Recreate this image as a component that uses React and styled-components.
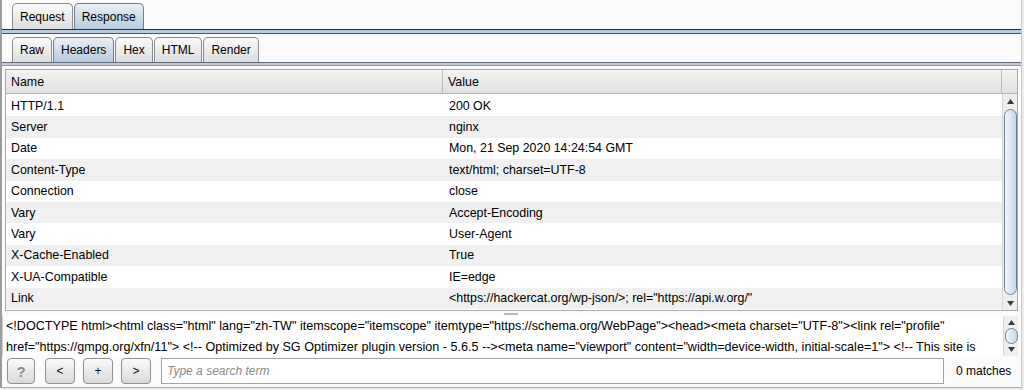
import React from "react";
import styled, { createGlobalStyle, css } from "styled-components";

const GlobalStyle = createGlobalStyle`
  html, body {
    margin: 0;
    padding: 0;
    background: #ececec;
  }
  body {
    font-family: "Liberation Sans", Arial, sans-serif;
    font-size: 12px;
    color: #000;
  }
`;

const Window = styled.div`
  width: 1019px;
  height: 387px;
  background: #fbfbfb;
  border-left: 2px solid #9c9c9c;
  border-right: 1px solid #c9c9c9;
  border-bottom: 1px solid #a8a8a8;
  display: flex;
  flex-direction: column;
  overflow: hidden;
`;

const TabStrip = styled.div`
  display: flex;
  align-items: flex-end;
  padding-left: 10px;
  height: ${(p) => p.$height}px;
  margin-top: ${(p) => p.$top}px;
`;

const Tab = styled.div`
  height: ${(p) => p.$height}px;
  box-sizing: border-box;
  padding: 0 7px;
  display: flex;
  align-items: center;
  border: 1px solid #8c8c8c;
  border-bottom: none;
  border-radius: 5px 5px 0 0;
  margin-right: 1px;
  background: linear-gradient(#fafafa, #dedede);
  ${(p) =>
    p.$active &&
    css`
      border-color: #6f7f8e;
      background: linear-gradient(#e9eff5, #b7cbdf);
    `}
`;

const Band = styled.div`
  height: ${(p) => (p.$primary ? 3 : 2)}px;
  border-top: 1px solid ${(p) => (p.$primary ? "#22303c" : "#5f6a78")};
  border-bottom: 1px solid ${(p) => (p.$primary ? "#4b5661" : "#8e98a5")};
  background: ${(p) => (p.$primary ? "#b6cce0" : "#c3cdd9")};
`;

const TablePane = styled.div`
  margin: 3px 3px 0 3px;
  height: 240px;
  border: 1px solid #a9a9a9;
  display: grid;
  grid-template-columns: 1fr 15px;
  grid-template-rows: 24px 1fr;
  background: #fff;
  font-size: 12.4px;
`;

const HeaderRow = styled.div`
  display: grid;
  grid-template-columns: 437px 1fr;
  border-bottom: 1px solid #b2b2b2;
  background: linear-gradient(#f3f3f3, #e1e1e1);
`;

const HeaderCell = styled.div`
  display: flex;
  align-items: center;
  padding-left: 5px;
  border-right: 1px solid #b9b9b9;
`;

const Corner = styled.div`
  border-bottom: 1px solid #b2b2b2;
  background: linear-gradient(#f3f3f3, #e1e1e1);
`;

const Rows = styled.div`
  display: flex;
  flex-direction: column;
  padding-top: 1px;
`;

const Row = styled.div`
  display: grid;
  grid-template-columns: 438px 1fr;
  height: 21.4px;
  align-items: center;
  background: ${(p) => (p.$alt ? "#f0f0f0" : "#fff")};
`;

const Cell = styled.div`
  padding-left: 5px;
  white-space: nowrap;
  overflow: hidden;
`;

const ScrollTrack = styled.div`
  display: flex;
  flex-direction: column;
  align-items: center;
  background: #eeeeee;
  border-left: 1px solid #d6d6d6;
  padding: ${(p) => (p.$small ? "3px 0 2px" : "4px 0 3px")};
`;

const ArrowBox = styled.div`
  height: 7px;
  display: flex;
  align-items: center;
  justify-content: center;
`;

const Thumb = styled.div`
  flex: ${(p) => (p.$small ? "0 0 16px" : "1")};
  width: 13px;
  margin: ${(p) => (p.$small ? "2px 0" : "4px 0 5px")};
  box-sizing: border-box;
  border: 1px solid #6e7f90;
  border-radius: ${(p) => (p.$small ? "8px" : "7px")};
  background: linear-gradient(to right, #f1f6fb, #c3d6e9);
`;

const Splitter = styled.div`
  height: 5px;
  display: flex;
  justify-content: center;
  align-items: center;
`;

const Grip = styled.div`
  width: 14px;
  height: 2px;
  margin-left: -2px;
  background: #b6b6b6;
`;

const SourcePane = styled.div`
  height: 40px;
  display: grid;
  grid-template-columns: 1fr 15px;
  background: #fff;
  border-left: 1px solid #d0d0d0;
  margin-right: 3px;
`;

const SourceText = styled.div`
  padding-left: 3px;
  line-height: 20.5px;
  font-size: 12.6px;
  overflow: hidden;
`;

const SourceLine = styled.div`
  white-space: nowrap;
`;

const BottomBar = styled.div`
  display: flex;
  align-items: center;
  height: 28px;
  padding: 1px 4px 0 5px;
  gap: 8px;
`;

const Button = styled.div`
  width: ${(p) => p.$width || 30}px;
  height: 26px;
  box-sizing: border-box;
  border: 1px solid #8f8f8f;
  border-radius: 4px;
  background: linear-gradient(#fbfbfb, #d9d9d9);
  display: flex;
  align-items: center;
  justify-content: center;
  font-size: ${(p) => (p.$help ? 15 : 12)}px;
  font-weight: ${(p) => (p.$help ? "bold" : "normal")};
  color: ${(p) => (p.$help ? "#8c8c8c" : "#111")};
  margin-right: ${(p) => p.$gapAfter || 0}px;
`;

const SearchInput = styled.div`
  flex: 0 0 783px;
  height: 26px;
  box-sizing: border-box;
  border: 1px solid #a3a3a3;
  background: #fff;
  display: flex;
  align-items: center;
  padding-left: 5px;
  color: #8a8a8a;
  font-style: italic;
`;

const Matches = styled.div`
  margin-left: 4px;
  white-space: nowrap;
`;

const Arrow = ({ down }) => (
  <ArrowBox>
    <svg width="7" height="5" viewBox="0 0 7 5">
      <polygon
        points={down ? "0,0 7,0 3.5,5" : "0,5 7,5 3.5,0"}
        fill="#3a3a3a"
      />
    </svg>
  </ArrowBox>
);

const headers = [
  ["HTTP/1.1", "200 OK"],
  ["Server", "nginx"],
  ["Date", "Mon, 21 Sep 2020 14:24:54 GMT"],
  ["Content-Type", "text/html; charset=UTF-8"],
  ["Connection", "close"],
  ["Vary", "Accept-Encoding"],
  ["Vary", "User-Agent"],
  ["X-Cache-Enabled", "True"],
  ["X-UA-Compatible", "IE=edge"],
  ["Link", '<https://hackercat.org/wp-json/>; rel="https://api.w.org/"'],
];

const sourceLines = [
  '<!DOCTYPE html><html class="html" lang="zh-TW" itemscope="itemscope" itemtype="https://schema.org/WebPage"><head><meta charset="UTF-8"><link rel="profile"',
  'href="https://gmpg.org/xfn/11"> <!-- Optimized by SG Optimizer plugin version - 5.6.5 --><meta name="viewport" content="width=device-width, initial-scale=1"> <!-- This site is',
];

const App = () => {
  return (
    <>
      <GlobalStyle />
      <Window>
        <TabStrip $height={29} $top={0}>
          <Tab $height={26}>Request</Tab>
          <Tab $height={26} $active>
            Response
          </Tab>
        </TabStrip>
        <Band $primary />
        <TabStrip $height={25} $top={3}>
          <Tab $height={25}>Raw</Tab>
          <Tab $height={25} $active>
            Headers
          </Tab>
          <Tab $height={25}>Hex</Tab>
          <Tab $height={25}>HTML</Tab>
          <Tab $height={25}>Render</Tab>
        </TabStrip>
        <Band />
        <TablePane>
          <HeaderRow>
            <HeaderCell>Name</HeaderCell>
            <HeaderCell>Value</HeaderCell>
          </HeaderRow>
          <Corner />
          <Rows>
            {headers.map(([name, value], i) => (
              <Row key={i} $alt={i % 2 === 1}>
                <Cell>{name}</Cell>
                <Cell>{value}</Cell>
              </Row>
            ))}
          </Rows>
          <ScrollTrack>
            <Arrow />
            <Thumb />
            <Arrow down />
          </ScrollTrack>
        </TablePane>
        <Splitter>
          <Grip />
        </Splitter>
        <SourcePane>
          <SourceText>
            {sourceLines.map((line, i) => (
              <SourceLine key={i}>{line}</SourceLine>
            ))}
          </SourceText>
          <ScrollTrack $small>
            <Arrow />
            <Thumb $small />
            <Arrow down />
          </ScrollTrack>
        </SourcePane>
        <BottomBar>
          <Button $help $width={28} $gapAfter={2}>
            ?
          </Button>
          <Button>&lt;</Button>
          <Button>+</Button>
          <Button $gapAfter={2}>&gt;</Button>
          <SearchInput>Type a search term</SearchInput>
          <Matches>0 matches</Matches>
        </BottomBar>
      </Window>
    </>
  );
};

export default App;
